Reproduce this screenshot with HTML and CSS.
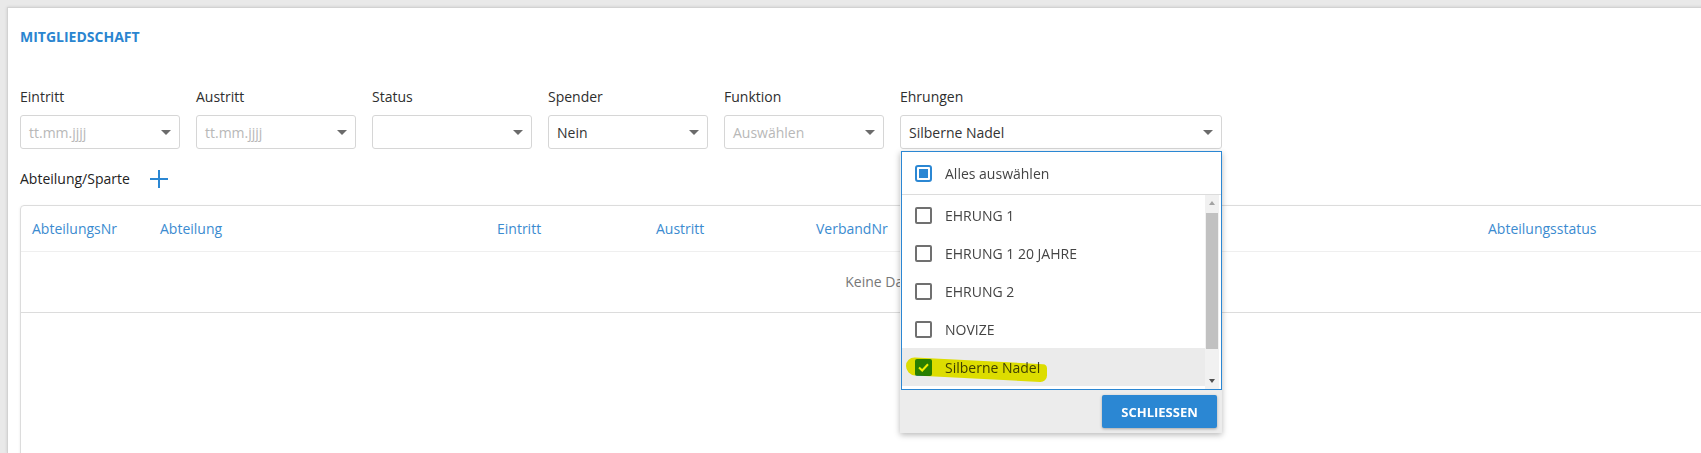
FILE: index.html
```html
<!DOCTYPE html>
<html lang="de">
<head>
    <meta charset="UTF-8">
    <meta name="viewport" content="width=device-width, initial-scale=1.0">
    <title>Mitgliedschaft</title>
    <link rel="stylesheet" href="styles.css">
</head>
<body>
    <div class="panel">
        <h2 class="panel-title">MITGLIEDSCHAFT</h2>

        <div class="form-row">
            <div class="field">
                <label>Eintritt</label>
                <div class="select"><span class="placeholder">tt.mm.jjjj</span><span class="caret"></span></div>
            </div>
            <div class="field">
                <label>Austritt</label>
                <div class="select"><span class="placeholder">tt.mm.jjjj</span><span class="caret"></span></div>
            </div>
            <div class="field">
                <label>Status</label>
                <div class="select"><span></span><span class="caret"></span></div>
            </div>
            <div class="field">
                <label>Spender</label>
                <div class="select"><span>Nein</span><span class="caret"></span></div>
            </div>
            <div class="field">
                <label>Funktion</label>
                <div class="select"><span class="placeholder">Auswählen</span><span class="caret"></span></div>
            </div>
            <div class="field field-wide">
                <label>Ehrungen</label>
                <div class="select"><span>Silberne Nadel</span><span class="caret"></span></div>

                <div class="popup">
                    <div class="popup-list">
                        <div class="option select-all">
                            <span class="check check-partial"></span>
                            Alles auswählen
                        </div>
                        <div class="scroll-area">
                            <div class="options">
                                <div class="option"><span class="check"></span>EHRUNG 1</div>
                                <div class="option"><span class="check"></span>EHRUNG 1 20 JAHRE</div>
                                <div class="option"><span class="check"></span>EHRUNG 2</div>
                                <div class="option"><span class="check"></span>NOVIZE</div>
                                <div class="option option-active">
                                    <span class="check check-on">
                                        <svg width="13" height="13" viewBox="0 0 13 13"><path d="M2 6.5 L5.2 9.5 L11 3.2" fill="none" stroke="#fff" stroke-width="2"/></svg>
                                    </span>
                                    Silberne Nadel
                                    <span class="marker"></span>
                                </div>
                            </div>
                            <div class="scrollbar">
                                <span class="sb-arrow sb-up"></span>
                                <span class="sb-thumb"></span>
                                <span class="sb-arrow sb-down"></span>
                            </div>
                        </div>
                    </div>
                    <div class="popup-footer">
                        <button class="btn-close">SCHLIESSEN</button>
                    </div>
                </div>
            </div>
        </div>

        <div class="section-head">
            <span>Abteilung/Sparte</span>
            <svg class="plus" width="18" height="18" viewBox="0 0 18 18"><path d="M9 0 V18 M0 9 H18" stroke="#2b87d3" stroke-width="2"/></svg>
        </div>

        <div class="grid-card">
            <div class="grid-head">
                <span>AbteilungsNr</span>
                <span>Abteilung</span>
                <span>Eintritt</span>
                <span>Austritt</span>
                <span>VerbandNr</span>
                <span>Abteilungsstatus</span>
            </div>
            <div class="grid-empty">Keine Daten</div>
        </div>
    </div>
</body>
</html>
```

FILE: styles.css
```css
body {
    margin: 0;
    background: #e9e9e9;
    font-family: "Open Sans", "Noto Sans", sans-serif;
    font-size: 14px;
    color: #333;
    overflow: hidden;
    height: 453px;
}
.panel {
    margin: 7px 0 0 7px;
    width: 1760px;
    height: 446px;
    overflow: hidden;
    background: #fff;
    border-top: 1px solid #d2d2d2;
    border-left: 1px solid #d2d2d2;
    box-shadow: 0 0 3px rgba(0,0,0,0.12);
    padding: 19px 0 0 12px;
    box-sizing: border-box;
}
.panel-title {
    margin: 0;
    font-size: 14px;
    line-height: 20px;
    font-weight: 700;
    color: #2a85d0;
}
.form-row {
    display: flex;
    gap: 16px;
    margin-top: 40px;
}
.field {
    width: 160px;
    position: relative;
}
.field-wide { width: 322px; }
.field label {
    display: block;
    line-height: 20px;
    margin-bottom: 8px;
    color: #2e2e2e;
}
.select {
    height: 34px;
    box-sizing: border-box;
    border: 1px solid #d6d6d6;
    border-radius: 3px;
    padding: 0 8px;
    display: flex;
    align-items: center;
    justify-content: space-between;
    color: #333;
}
.placeholder { color: #b8b8b8; }
.caret {
    width: 0;
    height: 0;
    border-left: 5px solid transparent;
    border-right: 5px solid transparent;
    border-top: 5px solid #6b6b6b;
}

/* dropdown */
.popup {
    position: absolute;
    top: 64px;
    left: 0;
    width: 322px;
    background: #ececec;
    box-shadow: 0 2px 6px rgba(0,0,0,0.28);
    z-index: 5;
}
.popup-list {
    margin-left: 1px;
    background: #fff;
    border: 1px solid #2b87d3;
}
.option {
    position: relative;
    display: flex;
    align-items: center;
    height: 38px;
    padding-left: 13px;
    color: #444;
}
.select-all {
    height: 42px;
    border-bottom: 1px solid #dcdcdc;
}
.check {
    width: 17px;
    height: 17px;
    box-sizing: border-box;
    border: 2px solid #707070;
    border-radius: 2px;
    margin-right: 13px;
    background: #fff;
    display: flex;
    align-items: center;
    justify-content: center;
}
.check-partial {
    border-color: #2b87d3;
    border-radius: 3px;
}
.check-partial::after {
    content: "";
    width: 9px;
    height: 9px;
    background: #2b87d3;
}
.check-on {
    background: #2b87d3;
    border-color: #2b87d3;
}
.scroll-area {
    display: flex;
    height: 194px;
    overflow: hidden;
}
.options {
    flex: 1;
    padding-top: 1px;
}
.option-active { background: #ebebeb; }
.marker {
    position: absolute;
    left: 4px;
    top: 9px;
    width: 141px;
    height: 18px;
    background: #f0f000;
    mix-blend-mode: multiply;
    border-radius: 9px 4px 7px 9px;
    transform-origin: left top;
    transform: skewY(3deg);
}
.scrollbar {
    width: 14px;
    margin-right: 2px;
    background: #f1f1f1;
    position: relative;
}
.sb-arrow {
    position: absolute;
    left: 4px;
    width: 0;
    height: 0;
    border-left: 3px solid transparent;
    border-right: 3px solid transparent;
}
.sb-up { top: 6px; border-bottom: 4px solid #a3a3a3; }
.sb-down { bottom: 6px; border-top: 4px solid #505050; }
.sb-thumb {
    position: absolute;
    left: 1px;
    right: 1px;
    top: 18px;
    height: 136px;
    background: #c1c1c1;
}
.popup-footer {
    height: 43px;
    display: flex;
    justify-content: flex-end;
    align-items: flex-start;
    padding: 5px 5px 0 0;
    box-sizing: border-box;
}
.btn-close {
    width: 115px;
    height: 33px;
    border: none;
    border-radius: 2px;
    background: #2b87d3;
    color: #fff;
    font-family: "Open Sans", "Noto Sans", sans-serif;
    font-weight: 700;
    font-size: 13px;
    box-shadow: 0 1px 3px rgba(0,0,0,0.3);
}

/* department grid */
.section-head {
    display: flex;
    align-items: center;
    gap: 20px;
    margin-top: 20px;
    line-height: 20px;
    color: #222;
}
.grid-card {
    margin-top: 16px;
    width: 1728px;
    height: 300px;
    border: 1px solid #dcdcdc;
    border-radius: 4px;
    box-shadow: 0 1px 3px rgba(0,0,0,0.08);
}
.grid-head {
    display: grid;
    grid-template-columns: 128px 337px 159px 160px 672px 1fr;
    height: 45px;
    align-items: center;
    padding-left: 11px;
    border-bottom: 1px solid #efefef;
    color: #3b8bd0;
}
.grid-empty {
    height: 60px;
    line-height: 60px;
    text-align: center;
    color: #777;
    border-bottom: 1px solid #dcdcdc;
}
```
